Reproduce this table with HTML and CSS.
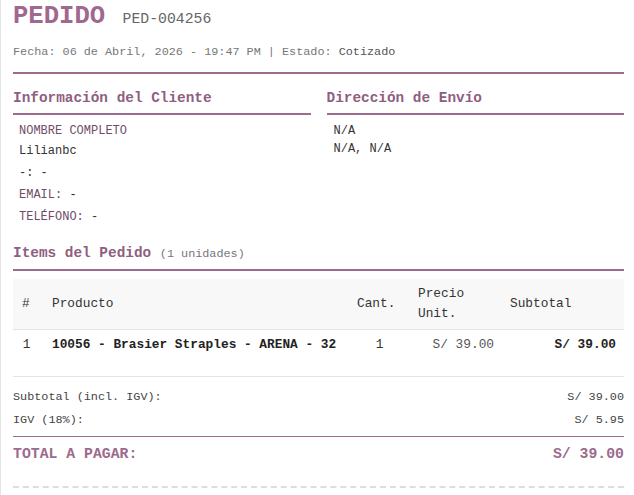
FILE: index.html
```html
<!DOCTYPE html>
<html lang="es">
<head>
    <meta charset="UTF-8">
    <meta name="viewport" content="width=device-width, initial-scale=1.0">
    <title>Pedido PED-004256</title>
    <link rel="stylesheet" href="styles.css">
</head>
<body>

<div class="receipt">
    <!-- Encabezado -->
    <div class="receipt-header">
        <h1>PEDIDO <span class="order-code">PED-004256</span></h1>
        <p class="order-meta">Fecha: 06 de Abril, 2026 - 19:47 PM | Estado: <span class="status">Cotizado</span></p>
    </div>

    <!-- Cliente y envío -->
    <div class="info-grid">
        <div class="info-block">
            <h2>Información del Cliente</h2>
            <div class="info-body">
                <div class="info-label">NOMBRE COMPLETO</div>
                <div class="info-value">Lilianbc</div>
                <div class="info-row">-: -</div>
                <div class="info-row"><span class="info-label">EMAIL:</span> -</div>
                <div class="info-row"><span class="info-label">TELÉFONO:</span> -</div>
            </div>
        </div>
        <div class="info-block">
            <h2>Dirección de Envío</h2>
            <div class="info-body address">
                <div>N/A</div>
                <div>N/A, N/A</div>
            </div>
        </div>
    </div>

    <!-- Items -->
    <h2 class="items-title">Items del Pedido <span class="units">(1 unidades)</span></h2>
    <table class="items-table">
        <colgroup>
            <col class="col-num">
            <col class="col-product">
            <col class="col-qty">
            <col class="col-price">
            <col class="col-subtotal">
        </colgroup>
        <thead>
            <tr>
                <th>#</th>
                <th>Producto</th>
                <th>Cant.</th>
                <th>Precio Unit.</th>
                <th>Subtotal</th>
            </tr>
        </thead>
        <tbody>
            <tr>
                <td class="num">1</td>
                <td class="product">10056 - Brasier Straples - ARENA - 32</td>
                <td class="qty">1</td>
                <td class="price">S/ 39.00</td>
                <td class="subtotal">S/ 39.00</td>
            </tr>
        </tbody>
    </table>

    <!-- Totales -->
    <div class="totals">
        <div class="totals-row"><span>Subtotal (incl. IGV):</span><span>S/ 39.00</span></div>
        <div class="totals-row"><span>IGV (18%):</span><span>S/ 5.95</span></div>
    </div>
    <div class="grand-total">
        <span>TOTAL A PAGAR:</span>
        <span>S/ 39.00</span>
    </div>
    <div class="receipt-footer"></div>
</div>

</body>
</html>
```

FILE: styles.css
```css
body {
    margin: 0;
    padding: 0;
    background-color: #ffffff;
    font-family: "Courier New", "Nimbus Mono PS", "Nimbus Mono L", FreeMono, "Liberation Mono", monospace;
    color: #333333;
}

.receipt {
    border-left: 1px solid #e4e4e4;
    padding: 3px 10px 0 12px;
    min-height: 495px;
    box-sizing: border-box;
}

h1, h2, p {
    margin: 0;
}

/* Encabezado */
.receipt-header {
    padding-bottom: 12px;
    border-bottom: 2px solid #9c6b8d;
}

h1 {
    font-size: 25.6px;
    line-height: 28px;
    font-weight: bold;
    color: #a0688f;
}

.order-code {
    font-size: 14.8px;
    font-weight: normal;
    color: #666666;
    margin-left: 2px;
}

.order-meta {
    margin-top: 11px;
    font-size: 11.8px;
    line-height: 16px;
    color: #777777;
}

.status {
    color: #555555;
}

/* Cliente y envío */
.info-grid {
    display: grid;
    grid-template-columns: 1fr 1fr;
    gap: 16px;
    margin-top: 15px;
}

h2 {
    font-size: 14.4px;
    line-height: 18px;
    font-weight: bold;
    color: #8e5f80;
    padding-bottom: 6px;
    border-bottom: 2px solid #9c6b8d;
}

.info-body {
    padding: 7px 6px 0 6px;
    font-size: 12px;
    color: #333333;
}

.info-label {
    color: #6f4d66;
    line-height: 18px;
}

.info-value {
    line-height: 22px;
}

.info-row {
    line-height: 22px;
}

.address {
    padding-left: 7px;
    line-height: 18px;
}

/* Items */
.items-title {
    margin-top: 16px;
}

.units {
    font-size: 11.8px;
    font-weight: normal;
    color: #777777;
}

.items-table {
    width: 100%;
    margin-top: 8px;
    border-collapse: collapse;
    table-layout: fixed;
    font-size: 12.8px;
}

.col-num { width: 31px; }
.col-product { width: 305px; }
.col-qty { width: 61px; }
.col-price { width: 92px; }
.col-subtotal { width: 122px; }

.items-table th {
    background-color: #f8f8f9;
    text-align: left;
    font-weight: normal;
    color: #333333;
    line-height: 20px;
    padding: 5px 8px;
    height: 40px;
    border-bottom: 1px solid #e4e4e4;
}

.items-table th:first-child {
    padding-left: 9px;
}

.items-table td {
    vertical-align: top;
    line-height: 16px;
    padding: 7px 8px 23px 8px;
    border-bottom: 1px solid #e4e4e4;
}

.items-table .num {
    text-align: center;
    padding-left: 4px;
}

.items-table .product {
    font-weight: bold;
    color: #222222;
}

.items-table .qty {
    text-align: center;
}

.items-table .price {
    text-align: right;
    color: #555555;
}

.items-table .subtotal {
    text-align: right;
    font-weight: bold;
    color: #222222;
}

/* Totales */
.totals {
    padding: 9px 0 4px 0;
    border-bottom: 1px solid #9c6b8d;
    font-size: 11.8px;
    color: #444444;
}

.totals-row {
    display: flex;
    justify-content: space-between;
    line-height: 23px;
}

.grand-total {
    display: flex;
    justify-content: space-between;
    padding-top: 7px;
    line-height: 20px;
    font-size: 14.8px;
    font-weight: bold;
    color: #9c6b8d;
}

.receipt-footer {
    margin-top: 22px;
    border-top: 2px dashed #dddddd;
}
```
